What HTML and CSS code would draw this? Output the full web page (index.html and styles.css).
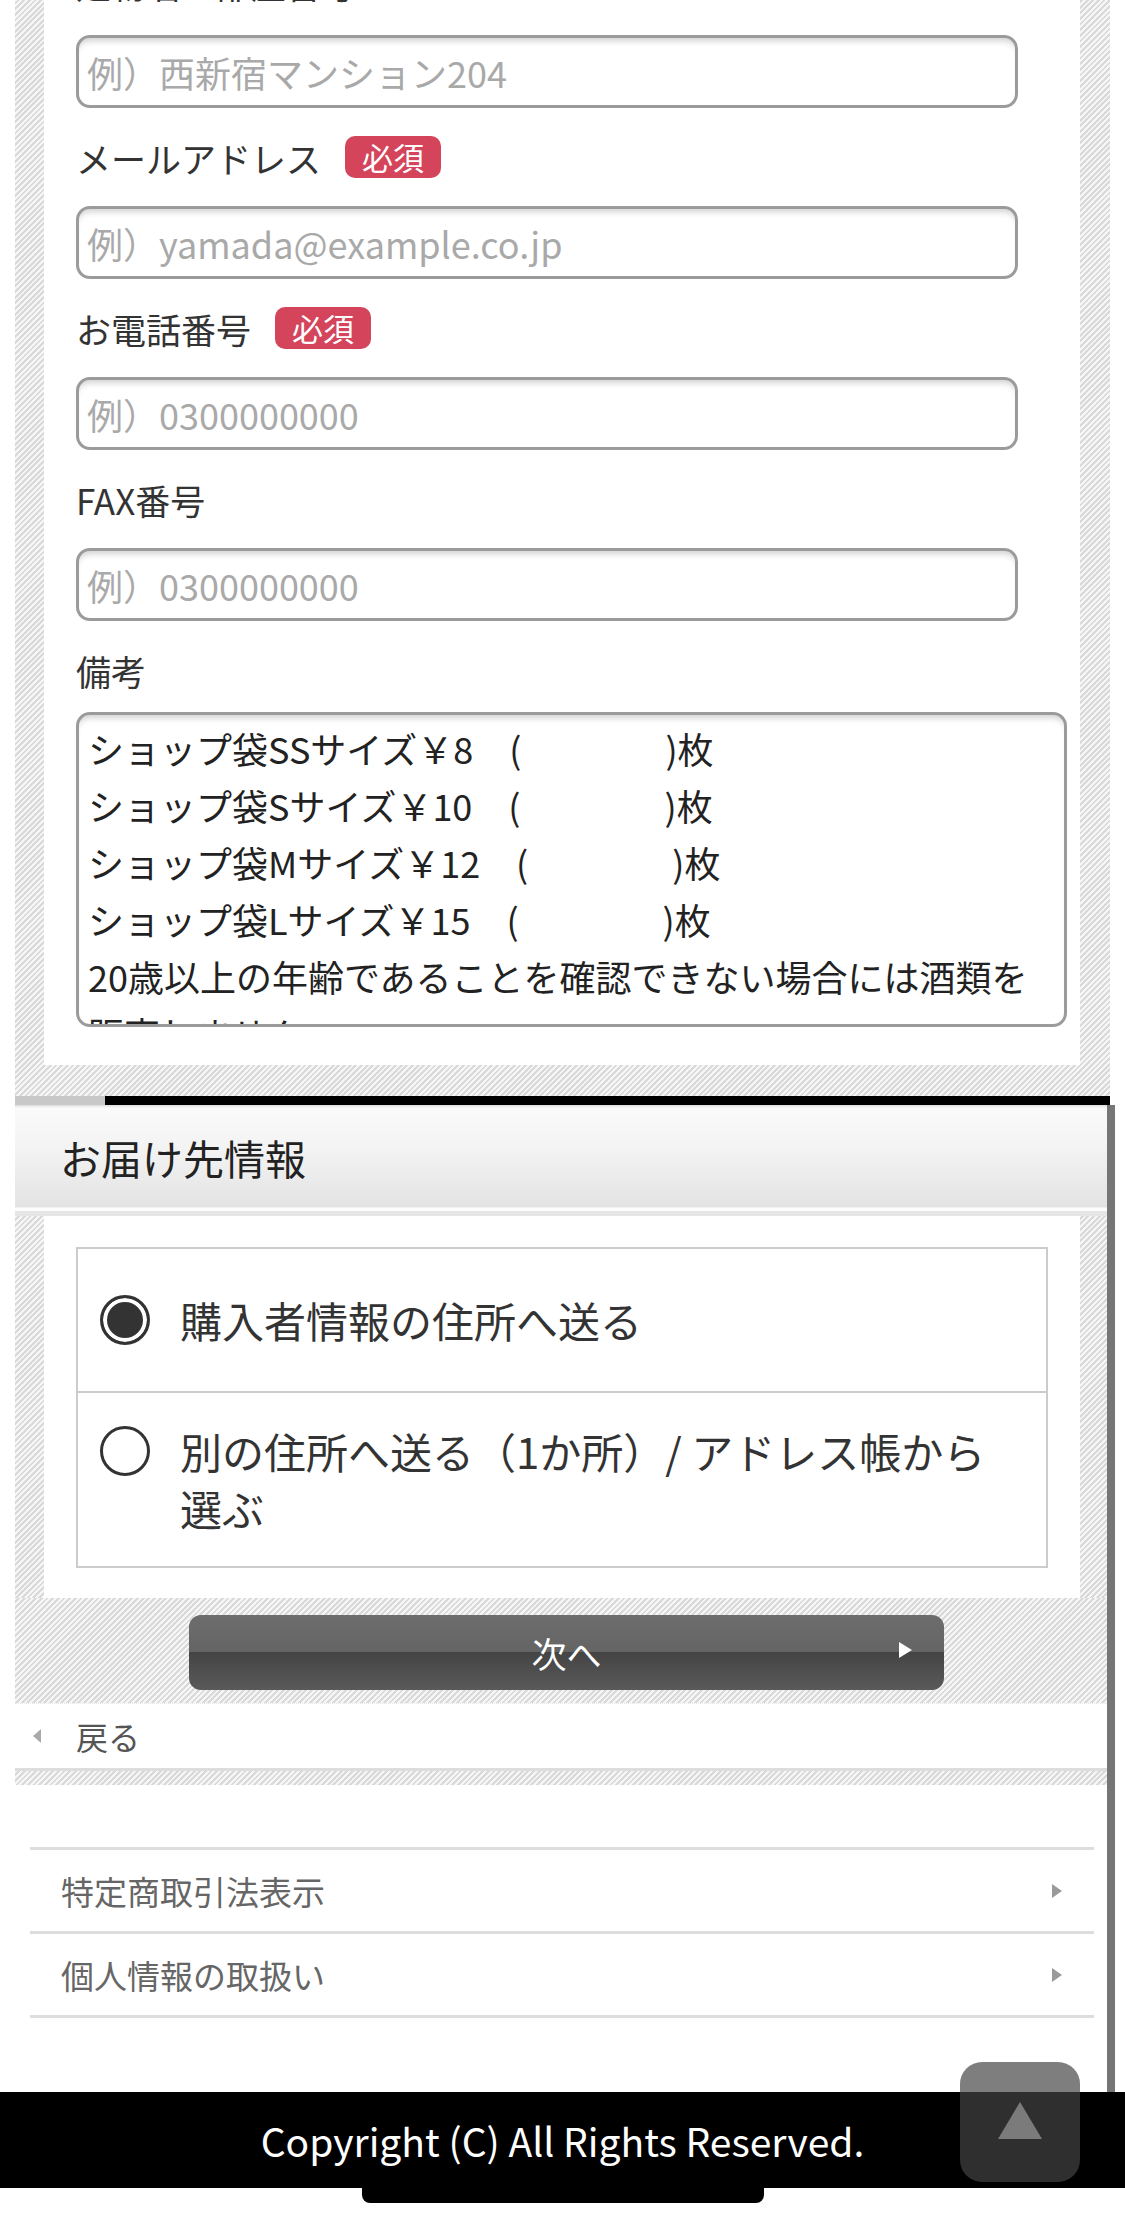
FILE: index.html
```html
<!DOCTYPE html>
<html lang="ja">
<head>
    <meta charset="UTF-8">
    <meta name="viewport" content="width=device-width, initial-scale=1.0">
    <title>ご注文手続き</title>
    <link rel="stylesheet" href="styles.css">
</head>
<body>
    <!-- 購入者情報 (続き) -->
    <div class="form-section stripe">
        <div class="panel">
            <div class="field-label field-label-top">建物名・部屋番号</div>
            <input class="text-input" type="text" placeholder="例）西新宿マンション204">

            <div class="field-label">メールアドレス<span class="badge">必須</span></div>
            <input class="text-input" type="email" placeholder="例）yamada@example.co.jp">

            <div class="field-label">お電話番号<span class="badge">必須</span></div>
            <input class="text-input" type="tel" placeholder="例）0300000000">

            <div class="field-label">FAX番号</div>
            <input class="text-input" type="tel" placeholder="例）0300000000">

            <div class="field-label">備考</div>
            <textarea class="note" readonly>ショップ袋SSサイズ￥8　(　　　　)枚
ショップ袋Sサイズ￥10　(　　　　)枚
ショップ袋Mサイズ￥12　(　　　　)枚
ショップ袋Lサイズ￥15　(　　　　)枚
20歳以上の年齢であることを確認できない場合には酒類を
販売しません。</textarea>
        </div>
    </div>

    <!-- お届け先情報 -->
    <div class="delivery">
        <div class="step-bar"></div>
        <div class="delivery-body">
            <h2 class="section-title">お届け先情報</h2>

            <div class="delivery-wrap stripe">
                <div class="delivery-panel">
                    <div class="options">
                        <div class="option option-first">
                            <label class="choice">
                                <span class="radio-box"><input class="radio" type="radio" name="dest" checked></span>
                                <span>購入者情報の住所へ送る</span>
                            </label>
                        </div>
                        <div class="option">
                            <label class="choice">
                                <span class="radio-box"><input class="radio" type="radio" name="dest"></span>
                                <span>別の住所へ送る（1か所）/ アドレス帳から<br>選ぶ</span>
                            </label>
                        </div>
                    </div>
                </div>
            </div>

            <div class="next-area stripe">
                <a class="next-btn" href="#">次へ</a>
            </div>

            <a class="back-row" href="#">戻る</a>
            <div class="back-gap stripe"></div>

            <ul class="links">
                <li><a href="#">特定商取引法表示</a></li>
                <li><a href="#">個人情報の取扱い</a></li>
            </ul>
        </div>
    </div>

    <footer class="site-footer">Copyright (C) All Rights Reserved.</footer>
    <div class="home-bar"></div>

    <a class="page-top" href="#"><span class="page-top-arrow"></span></a>
</body>
</html>
```

FILE: styles.css
```css
html, body {
    margin: 0;
    overflow: hidden;
}

body {
    background: #fff;
    font-family: "Noto Sans CJK JP", "Noto Sans", sans-serif;
    color: #333;
}

a {
    color: inherit;
    text-decoration: none;
}

.stripe {
    background: repeating-linear-gradient(135deg, #f6f6f6 0, #f6f6f6 2px, #d9d9d9 2px, #d9d9d9 4px);
}

/* upper form */
.form-section {
    margin-left: 15px;
    width: 1095px;
    box-sizing: border-box;
    padding: 0 30px 31px 29px;
}

.panel {
    background: #fff;
    padding: 0 13px 38px 32px;
}

.field-label {
    height: 98px;
    display: flex;
    align-items: center;
    font-size: 35px;
    color: #333;
}

/* label scrolled mostly off the top */
.field-label-top {
    margin-top: -63px;
    box-sizing: border-box;
    padding-bottom: 6px;
}

.badge {
    margin-left: 24px;
    height: 42px;
    line-height: 42px;
    padding: 0 17px;
    border-radius: 10px;
    background: #d4455b;
    color: #fff;
    font-size: 31px;
}

.text-input {
    display: block;
    box-sizing: border-box;
    width: 942px;
    height: 73px;
    margin: 0;
    padding: 0 8px;
    border: 3px solid #9b9b9b;
    border-radius: 14px;
    box-shadow: inset 0 7px 6px -4px rgba(0,0,0,0.18);
    background: #fff;
    font: 36px "Noto Sans CJK JP", sans-serif;
    color: #333;
    outline: none;
}

.text-input::placeholder {
    color: #a9a9a9;
}

.note {
    display: block;
    box-sizing: border-box;
    width: 991px;
    height: 315px;
    margin: -7px 0 0;
    padding: 5px 9px;
    border: 3px solid #9b9b9b;
    border-radius: 14px;
    box-shadow: inset 0 7px 6px -4px rgba(0,0,0,0.18);
    font: 36px/57px "Noto Sans CJK JP", sans-serif;
    color: #222;
    resize: none;
    overflow: hidden;
    outline: none;
}

/* delivery */
.delivery {
    margin-left: 15px;
    width: 1100px;
}

.step-bar {
    width: 1095px;
    height: 9px;
    background: linear-gradient(to right, #c8c8c8 90px, #000 90px);
}

.delivery-body {
    border-right: 8px solid #767676;
    padding-bottom: 74px;
}

.section-title {
    margin: 0;
    height: 111px;
    box-sizing: border-box;
    padding: 0 0 8px 45px;
    display: flex;
    align-items: center;
    font-size: 41px;
    font-weight: normal;
    color: #222;
    background: linear-gradient(to bottom, #dcdcdc 0, #fafafa 3px, #f3f3f3 40%, #e3e3e3 calc(100% - 9px), #fdfdfd calc(100% - 8px), #fdfdfd calc(100% - 5px), #e6e6e6 calc(100% - 5px));
}

.delivery-wrap {
    padding: 0 27px 0 29px;
}

.delivery-panel {
    background: #fff;
    padding: 31px 32px 30px;
}

.options {
    border: 2px solid #ccc;
}

.option {
    display: flex;
    align-items: center;
    box-sizing: border-box;
    padding: 29px 30px 30px 22px;
}

.option-first {
    min-height: 142px;
}

.option + .option {
    border-top: 2px solid #ccc;
}

.choice {
    display: flex;
    align-items: flex-start;
    gap: 30px;
    font-size: 42px;
    line-height: 57px;
    color: #333;
}

.radio-box {
    flex: none;
    height: 57px;
    display: flex;
    align-items: center;
}

.radio {
    appearance: none;
    -webkit-appearance: none;
    margin: 0;
    width: 50px;
    height: 50px;
    border: 3px solid #333;
    border-radius: 50%;
    background: #fff;
    box-sizing: border-box;
}

.radio:checked {
    background: #333;
    box-shadow: inset 0 0 0 4px #fff;
}

.next-area {
    padding: 17px 0 13px 174px;
}

.next-btn {
    position: relative;
    display: flex;
    align-items: center;
    justify-content: center;
    width: 755px;
    height: 75px;
    border-radius: 12px;
    background: linear-gradient(to bottom, #6d6d6d 0, #646464 50%, #444 50%, #5a5a5a 100%);
    color: #fff;
    font-size: 35px;
}

.next-btn::after {
    content: "";
    position: absolute;
    right: 32px;
    top: 27px;
    border-left: 13px solid #fff;
    border-top: 8px solid transparent;
    border-bottom: 8px solid transparent;
}

.back-row {
    height: 65px;
    box-sizing: border-box;
    display: flex;
    align-items: center;
    padding-left: 18px;
    border-top: 1px dotted #e6e6e6;
    background: #fff;
    font-size: 32px;
    color: #555;
}

.back-row::before {
    content: "";
    margin-right: 35px;
    border-right: 8px solid #aaa;
    border-top: 7px solid transparent;
    border-bottom: 7px solid transparent;
}

.back-gap {
    height: 14px;
    border-top: 3px solid #ddd;
}

.links {
    list-style: none;
    margin: 62px 13px 0 15px;
    padding: 0;
    border-bottom: 3px solid #ddd;
}

.links li {
    border-top: 3px solid #ddd;
}

.links a {
    height: 81px;
    display: flex;
    align-items: center;
    justify-content: space-between;
    padding: 0 32px 0 31px;
    font-size: 33px;
    color: #666;
}

.links a::after {
    content: "";
    border-left: 10px solid #9a9a9a;
    border-top: 7px solid transparent;
    border-bottom: 7px solid transparent;
}

/* footer */
.site-footer {
    height: 96px;
    display: flex;
    align-items: center;
    justify-content: center;
    background: #000;
    color: #fff;
    font-size: 39px;
}

.home-bar {
    width: 402px;
    height: 15px;
    margin: 0 auto;
    background: #000;
    border-radius: 0 0 8px 8px;
}

.page-top {
    position: fixed;
    right: 45px;
    bottom: 44px;
    width: 120px;
    height: 120px;
    border-radius: 22px;
    background: rgba(68,68,68,0.69);
    display: flex;
    justify-content: center;
}

.page-top-arrow {
    margin-top: 40px;
    width: 0;
    height: 0;
    border-left: 22px solid transparent;
    border-right: 22px solid transparent;
    border-bottom: 37px solid #7b7b7b;
}
```
